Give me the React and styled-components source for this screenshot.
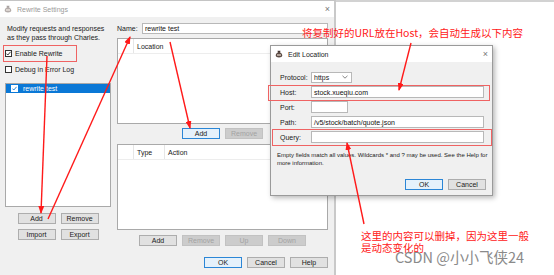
import React from "react";
import styled, { createGlobalStyle } from "styled-components";

const Global = createGlobalStyle`
  html, body { margin: 0; padding: 0; background: #fff; }
  body { font-family: "Liberation Sans", Arial, sans-serif; }
  * { box-sizing: border-box; }
`;

const Stage = styled.div`
  position: relative;
  width: 554px;
  height: 275px;
  overflow: hidden;
  display: flex;
  background: #fff;
`;

const Window = styled.div`
  width: 336px;
  height: 275px;
  display: flex;
  flex-direction: column;
  background: #f0f0f0;
  border-top: 1px solid #c4c4c4;
  border-right: 2px solid #c9c9c9;
`;

const TitleBar = styled.div`
  height: 16px;
  flex: none;
  background: #fff;
  display: flex;
  align-items: center;
  padding: 0 4px;
  gap: 5px;
  font-size: 7px;
  color: ${(p) => p.$color || "#9a9a9a"};
`;

const Close = styled.span`
  margin-left: auto;
  font-size: 9px;
  color: #777;
  line-height: 1;
`;

const Body = styled.div`
  flex: 1;
  display: flex;
  gap: 6px;
  padding: 0 6px 0 5px;
`;

const LeftCol = styled.div`
  width: 106px;
  display: flex;
  flex-direction: column;
`;

const RightCol = styled.div`
  width: 211px;
  display: flex;
  flex-direction: column;
`;

const Desc = styled.div`
  margin-top: 7px;
  padding-left: 2px;
  font-size: 7px;
  line-height: 9px;
  color: #1a1a1a;
`;

const CheckRow = styled.div`
  margin-top: 6px;
  height: 10px;
  display: flex;
  align-items: center;
  gap: 3px;
  font-size: 7px;
  color: #1a1a1a;
`;

const Box = styled.span`
  width: 7px;
  height: 7px;
  flex: none;
  border: 1px solid ${(p) => (p.$light ? "#fff" : "#333")};
  background: #fff;
  display: flex;
  align-items: center;
  justify-content: center;
`;

const List = styled.div`
  margin-top: 9px;
  height: 124px;
  background: #fff;
  border: 1px solid #a9a9a9;
`;

const ListRow = styled.div`
  height: 9px;
  background: #0a78d6;
  display: flex;
  align-items: center;
  padding-left: 5px;
  gap: 5px;
  font-size: 7px;
  color: #fff;
`;

const BtnGrid = styled.div`
  margin-top: 6px;
  display: grid;
  grid-template-columns: 38px 38px;
  gap: 5px;
  justify-content: center;
`;

const Btn = styled.div`
  width: 38px;
  height: 11px;
  display: flex;
  align-items: center;
  justify-content: center;
  font-size: 7px;
  color: ${(p) => (p.$disabled ? "#a3a3a3" : "#1a1a1a")};
  background: ${(p) => (p.$primary ? "#e5f1fb" : p.$disabled ? "#cccccc" : "#e1e1e1")};
  border: 1px solid ${(p) => (p.$primary ? "#2b86d6" : p.$disabled ? "#c2c2c2" : "#adadad")};
`;

const BtnRow = styled.div`
  margin-top: ${(p) => p.$mt}px;
  display: flex;
  gap: 5px;
  justify-content: ${(p) => (p.$end ? "flex-end" : "center")};
  margin-right: ${(p) => p.$mr || 0}px;
`;

const NameRow = styled.div`
  margin-top: 6px;
  height: 11px;
  display: flex;
  align-items: center;
  font-size: 7px;
  color: #1a1a1a;
`;

const NameLabel = styled.span`
  width: 25px;
  flex: none;
`;

const Input = styled.div`
  flex: ${(p) => (p.$w ? "none" : 1)};
  width: ${(p) => (p.$w ? `${p.$w}px` : "auto")};
  height: ${(p) => p.$h || 11}px;
  background: #fff;
  border: 1px solid #b8b8b8;
  display: flex;
  align-items: center;
  padding-left: 2px;
  font-size: 7px;
  color: #111;
`;

const Table = styled.div`
  margin-top: ${(p) => p.$mt}px;
  height: 86px;
  background: #fff;
  border: 1px solid #a9a9a9;
`;

const THead = styled.div`
  height: 15px;
  display: flex;
  border-bottom: 1px solid #ededed;
`;

const TH = styled.div`
  width: ${(p) => (p.$w ? `${p.$w}px` : "auto")};
  flex: ${(p) => (p.$w ? "none" : 1)};
  border-right: ${(p) => (p.$last ? "none" : "1px solid #e6e6e6")};
  display: flex;
  align-items: center;
  padding-left: 3px;
  font-size: 7px;
  color: #1a1a1a;
`;

const Desktop = styled.div`
  flex: 1;
  background: #fff;
  border-top: 2px solid #d2d2d2;
`;

const Dialog = styled.div`
  position: absolute;
  left: 270px;
  top: 45px;
  width: 223px;
  height: 151px;
  background: #f0f0f0;
  border: 1px solid #9a9a9a;
  box-shadow: 2px 2px 5px rgba(0, 0, 0, 0.28);
  display: flex;
  flex-direction: column;
`;

const DialogBody = styled.div`
  padding: 9px 8px 0 9px;
  display: flex;
  flex-direction: column;
  gap: 3px;
`;

const FieldRow = styled.div`
  height: 12px;
  display: flex;
  align-items: center;
  font-size: 7px;
  color: #1a1a1a;
`;

const FieldLabel = styled.span`
  width: 31px;
  flex: none;
`;

const Select = styled.div`
  width: 41px;
  height: 11px;
  background: #fff;
  border: 1px solid #b8b8b8;
  display: flex;
  align-items: center;
  justify-content: space-between;
  padding: 0 3px 0 2px;
  font-size: 7px;
`;

const Help = styled.div`
  margin: 5px 0 0 -3px;
  font-size: 6px;
  line-height: 8px;
  color: #222;
  white-space: nowrap;
`;

const RedBox = styled.div`
  position: absolute;
  left: ${(p) => p.$x}px;
  top: ${(p) => p.$y}px;
  width: ${(p) => p.$w}px;
  height: ${(p) => p.$h}px;
  border: 1px solid #ef6363;
  pointer-events: none;
`;

const Arrows = styled.svg`
  position: absolute;
  left: 0;
  top: 0;
  pointer-events: none;
`;

const Note = styled.div`
  position: absolute;
  left: ${(p) => p.$x}px;
  top: ${(p) => p.$y}px;
  font-family: "Noto Sans CJK SC", "Liberation Sans", sans-serif;
  font-size: 10.5px;
  line-height: 12px;
  color: #ff2020;
  white-space: nowrap;
`;

const Watermark = styled.div`
  position: absolute;
  left: 395px;
  top: 248px;
  font-family: "Noto Sans CJK SC", "Liberation Sans", sans-serif;
  font-size: 14.5px;
  line-height: 18px;
  color: #8a8a8a;
  white-space: nowrap;
`;

const Tick = ({ color = "#222" }) => (
  <svg width="5" height="5" viewBox="0 0 5 5">
    <polyline points="0.4,2.6 1.8,4 4.6,0.8" fill="none" stroke={color} strokeWidth="0.9" />
  </svg>
);

const CharlesIcon = ({ faded }) => (
  <svg width="8" height="8" viewBox="0 0 8 8" opacity={faded ? 0.45 : 1}>
    <path d="M2.5 0.8h3l-0.4 1.6c1.4 0.6 2.2 1.8 2.2 3.2 0 1.3-1.5 1.9-3.3 1.9S0.7 6.9 0.7 5.6c0-1.4 0.8-2.6 2.2-3.2z" fill="#5a4a44" />
    <path d="M2 4.2h4v1.6H2z" fill="#c8b9ae" />
    <path d="M3.2 1.5h1.6" stroke="#2a2020" strokeWidth="0.6" />
  </svg>
);

const Chevron = () => (
  <svg width="6" height="4" viewBox="0 0 6 4">
    <polyline points="0.5,0.8 3,3.2 5.5,0.8" fill="none" stroke="#666" strokeWidth="0.8" />
  </svg>
);

const arrows = [
  [47, 56, 41, 213],
  [48, 219, 130, 37],
  [170, 42, 190, 128],
  [411, 43, 399, 90],
  [364, 224, 347, 143],
];

export default function App() {
  return (
    <>
      <Global />
      <Stage>
        <Window>
          <TitleBar>
            <CharlesIcon faded />
            <span>Rewrite Settings</span>
            <Close>×</Close>
          </TitleBar>
          <Body>
            <LeftCol>
              <Desc>
                Modify requests and responses
                <br />
                as they pass through Charles.
              </Desc>
              <CheckRow>
                <Box>
                  <Tick />
                </Box>
                Enable Rewrite
              </CheckRow>
              <CheckRow>
                <Box />
                Debug in Error Log
              </CheckRow>
              <List>
                <ListRow>
                  <Box $light>
                    <Tick color="#0a78d6" />
                  </Box>
                  rewrite test
                </ListRow>
              </List>
              <BtnGrid>
                <Btn>Add</Btn>
                <Btn>Remove</Btn>
                <Btn>Import</Btn>
                <Btn>Export</Btn>
              </BtnGrid>
            </LeftCol>
            <RightCol>
              <NameRow>
                <NameLabel>Name:</NameLabel>
                <Input>rewrite test</Input>
              </NameRow>
              <Table $mt={4}>
                <THead>
                  <TH $w={16} />
                  <TH $last>Location</TH>
                </THead>
              </Table>
              <BtnRow $mt={4}>
                <Btn $primary>Add</Btn>
                <Btn $disabled>Remove</Btn>
              </BtnRow>
              <Table $mt={5}>
                <THead>
                  <TH $w={16} />
                  <TH $w={31}>Type</TH>
                  <TH $last>Action</TH>
                </THead>
              </Table>
              <BtnRow $mt={5}>
                <Btn>Add</Btn>
                <Btn $disabled>Remove</Btn>
                <Btn $disabled>Up</Btn>
                <Btn $disabled>Down</Btn>
              </BtnRow>
              <BtnRow $mt={11} $end>
                <Btn $primary>OK</Btn>
                <Btn>Cancel</Btn>
                <Btn>Help</Btn>
              </BtnRow>
            </RightCol>
          </Body>
        </Window>
        <Desktop />

        <Dialog>
          <TitleBar $color="#222">
            <CharlesIcon />
            <span>Edit Location</span>
            <Close>×</Close>
          </TitleBar>
          <DialogBody>
            <FieldRow>
              <FieldLabel>Protocol:</FieldLabel>
              <Select>
                https
                <Chevron />
              </Select>
            </FieldRow>
            <FieldRow>
              <FieldLabel>Host:</FieldLabel>
              <Input $h={12}>stock.xueqiu.com</Input>
            </FieldRow>
            <FieldRow>
              <FieldLabel>Port:</FieldLabel>
              <Input $w={37} $h={12} />
            </FieldRow>
            <FieldRow>
              <FieldLabel>Path:</FieldLabel>
              <Input $h={12}>/v5/stock/batch/quote.json</Input>
            </FieldRow>
            <FieldRow>
              <FieldLabel>Query:</FieldLabel>
              <Input $h={12} />
            </FieldRow>
            <Help>
              Empty fields match all values. Wildcards * and ? may be used. See the Help for
              <br />
              more information.
            </Help>
            <BtnRow $mt={9} $end $mr={-2}>
              <Btn $primary>OK</Btn>
              <Btn>Cancel</Btn>
            </BtnRow>
          </DialogBody>
        </Dialog>

        <RedBox $x={3} $y={45} $w={74} $h={17} />
        <RedBox $x={268} $y={85} $w={222} $h={16} />
        <RedBox $x={272} $y={129} $w={220} $h={17} />

        <Note $x={302} $y={27}>将复制好的URL放在Host，会自动生成以下内容</Note>
        <Note $x={361} $y={230}>
          这里的内容可以删掉，因为这里一般
          <br />
          是动态变化的
        </Note>
        <Watermark>CSDN @小小飞侠24</Watermark>

        <Arrows width="554" height="275" viewBox="0 0 554 275">
          <defs>
            <marker id="ah" markerUnits="userSpaceOnUse" markerWidth="8" markerHeight="6" refX="7" refY="3" orient="auto">
              <path d="M0,0 L8,3 L0,6 z" fill="#ff1a1a" />
            </marker>
          </defs>
          {arrows.map(([x1, y1, x2, y2], i) => (
            <line key={i} x1={x1} y1={y1} x2={x2} y2={y2} stroke="#ff1a1a" strokeWidth="1.4" markerEnd="url(#ah)" />
          ))}
        </Arrows>
      </Stage>
    </>
  );
}
